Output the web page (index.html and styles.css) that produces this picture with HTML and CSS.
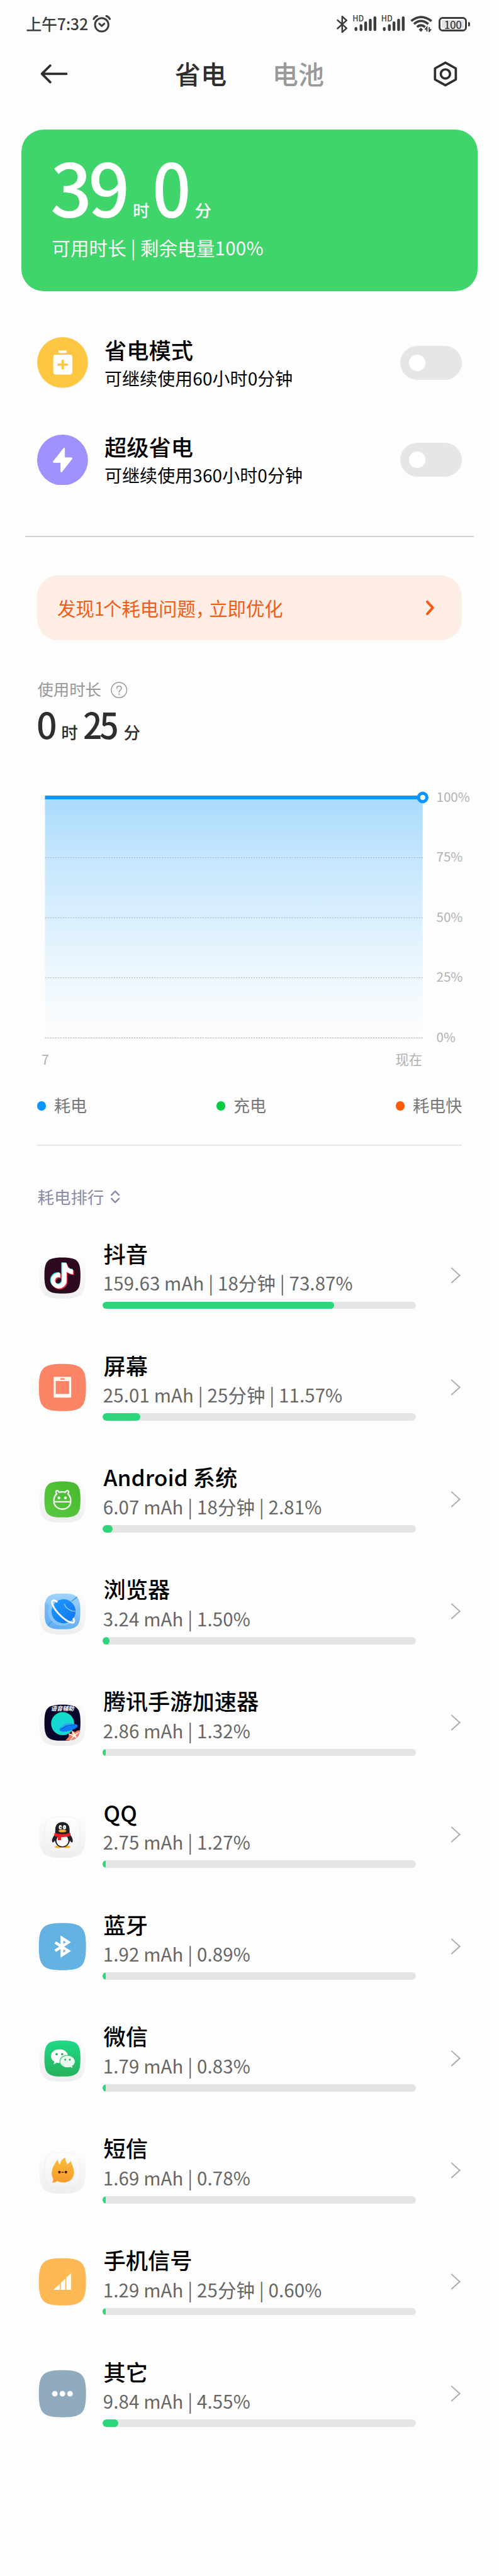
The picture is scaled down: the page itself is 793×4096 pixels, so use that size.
FILE: index.html
```html
<!DOCTYPE html>
<html lang="zh-CN">
<head>
<meta charset="utf-8">
<title>省电</title>
<link rel="stylesheet" href="styles.css">
</head>
<body>
<svg class="defs" aria-hidden="true">
  <defs>
    <linearGradient id="plate" x1="0" y1="0" x2="0" y2="1"><stop offset="0" stop-color="#fefefe"/><stop offset="1" stop-color="#eeeeef"/></linearGradient>
    <linearGradient id="white" x1="0" y1="0" x2="0" y2="1"><stop offset="0" stop-color="#fdfdfe"/><stop offset="1" stop-color="#f1f1f4"/></linearGradient>
    <linearGradient id="area" x1="0" y1="0" x2="0" y2="1"><stop offset="0" stop-color="#a9dafb"/><stop offset=".25" stop-color="#c5e6fe"/><stop offset=".5" stop-color="#daeffe"/><stop offset=".75" stop-color="#eef7fd"/><stop offset="1" stop-color="#fdfdfd"/></linearGradient>
    <linearGradient id="android" x1="0" y1="1" x2="1" y2="0"><stop offset="0" stop-color="#5acb40"/><stop offset="1" stop-color="#47b82d"/></linearGradient>
    <linearGradient id="sky" x1="0" y1="0" x2="0" y2="1"><stop offset="0" stop-color="#9ed4fc"/><stop offset="1" stop-color="#65b0f3"/></linearGradient>
    <linearGradient id="planet" x1="0" y1="0" x2="1" y2="1"><stop offset="0" stop-color="#1c9bfd"/><stop offset="1" stop-color="#1273ef"/></linearGradient>
    <radialGradient id="teal" cx=".5" cy=".6" r=".6"><stop offset="0" stop-color="#1ecfe0"/><stop offset="1" stop-color="#10dfc4"/></radialGradient>
    <linearGradient id="wechat" x1="0" y1="0" x2="0" y2="1"><stop offset="0" stop-color="#1fda88"/><stop offset="1" stop-color="#27b05a"/></linearGradient>
    <linearGradient id="flame" x1="0" y1="0" x2="0" y2="1"><stop offset="0" stop-color="#fbbd3a"/><stop offset="1" stop-color="#f69b2c"/></linearGradient>
    <path id="outer" d="M52 1C94 1 103 10 103 52S94 103 52 103 1 94 1 52 10 1 52 1Z"/>
    <path id="base" d="M52 3C93 3 102 11 102 52S93 102 52 102 2 93 2 52 11 3 52 3Z" fill="url(#plate)"/>
    <path id="inner" d="M52 13C84 13 91 20 91 52S84 91 52 91 13 84 13 52 20 13 52 13Z"/>
    <path id="note" d="M51 25h10c1 8 6 14 14 14v10c-5 0-10-2-14-5v19a17 17 0 1 1-17-17l3 .3v10a7.5 7.5 0 1 0 4 7Z"/>
    <clipPath id="clip"><use href="#inner"/></clipPath>
  </defs>
</svg>

<header class="status">
  <div class="status-left">
    <span class="clock">上午7:32</span>
    <svg class="alarm" viewBox="0 0 40 38" fill="none" stroke="#3d3d3d" stroke-width="4" stroke-linecap="round"><circle cx="20" cy="21" r="14.5"/><path d="M2.500 8.500Q5 3.500 10 2M37.500 8.500Q35 3.500 30 2"/><path d="M14.500 18.500L20 23.500 25.500 18.500"/></svg>
  </div>
  <div class="status-right">
    <svg class="s-bt" viewBox="0 0 24 40" fill="none" stroke="#3d3d3d" stroke-width="3.400" stroke-linejoin="round" stroke-linecap="round"><path d="M2 11L21.500 28.500 12 37V3L21.500 11.500 2 29"/></svg>
    <div class="signal"><span class="hd">HD</span><svg class="bars" viewBox="0 0 50 32" stroke="#3d3d3d" stroke-width="6" stroke-linecap="round"><path d="M5 26v2.500M16 20v8.500M26 14v14.500M36 8v20.500M46 3v25.500"/></svg></div>
    <div class="signal"><span class="hd">HD</span><svg class="bars" viewBox="0 0 50 32" stroke="#3d3d3d" stroke-width="6" stroke-linecap="round"><path d="M5 26v2.500M16 20v8.500M26 14v14.500M36 8v20.500M46 3v25.500"/></svg></div>
    <svg class="wifi" viewBox="0 0 48 36" fill="none" stroke="#3d3d3d" stroke-width="5"><path d="M2 11.500Q23 -6 46 11.500"/><path d="M8 18Q23 5 39 18M14.500 24.500Q23 17 32 24.500"/><path d="M23 26l4.500 4-4.500 5-4.500-5Z" fill="#3d3d3d" stroke="none"/><path d="M36 34v-9l-4 5M41 25v9l4-5" stroke-width="2.600"/></svg>
    <div class="battery"><span class="battery-level">100</span></div>
  </div>
</header>

<nav class="nav">
  <svg class="back" viewBox="0 0 60 42" fill="none" stroke="#2e2e2e" stroke-width="5" stroke-linecap="round" stroke-linejoin="round"><path d="M56.500 21H4M21.500 3L3.500 21 21.500 39"/></svg>
  <div class="tabs"><span class="tab tab-on">省电</span><span class="tab">电池</span></div>
  <svg class="gear" viewBox="0 0 54 56" fill="none" stroke="#2e2e2e" stroke-width="5" stroke-linejoin="round"><path d="M27 3.500L49.500 16V40L27 52.500 4.500 40V16Z"/><circle cx="27" cy="28" r="10"/></svg>
</nav>

<section class="card">
  <div class="remain"><span class="big">39</span><span class="unit">时</span><span class="big big-min">0</span><span class="unit">分</span></div>
  <div class="remain-note">可用时长 | 剩余电量100%</div>
</section>

<section class="modes">
  <div class="mode">
    <svg class="mode-icon" viewBox="0 0 110 110"><circle cx="55" cy="55" r="55" fill="#fec641"/><rect x="46" y="29" width="18" height="5.500" rx="1.500" fill="#fff"/><rect x="35" y="38" width="41" height="43" rx="5" fill="#fff"/><path d="M55.500 49v21M44 59.500h23" stroke="#fec641" stroke-width="5"/></svg>
    <div class="mode-text"><div class="title">省电模式</div><div class="mode-sub">可继续使用60小时0分钟</div></div>
    <span class="toggle"></span>
  </div>
  <div class="mode">
    <svg class="mode-icon" viewBox="0 0 110 110"><circle cx="55" cy="55" r="55" fill="#9e92fe"/><path d="M59.500 29V50H75L76 52 53 81.500 51 80.500V60.500H35.500L34.500 58.500 57.500 29.500Z" fill="#fff" stroke="#fff" stroke-linejoin="round"/></svg>
    <div class="mode-text"><div class="title">超级省电</div><div class="mode-sub">可继续使用360小时0分钟</div></div>
    <span class="toggle"></span>
  </div>
</section>
<hr class="rule rule-wide">

<section class="alert">
  <span class="alert-text">发现<span class="one">1</span>个耗电问题<span class="comma">，</span>立即优化</span>
  <svg class="alert-arrow" viewBox="0 0 20 34" fill="none" stroke="#fb5a0e" stroke-width="5.500" stroke-linecap="round" stroke-linejoin="round"><path d="M4 4L16 17 4 30"/></svg>
</section>

<section class="usage">
  <div class="usage-label"><span>使用时长</span>
    <svg class="help" viewBox="0 0 36 36" fill="none" stroke="#979797" stroke-width="2"><circle cx="18" cy="18" r="16.700"/><path d="M13 14.500Q13 9.500 18 9.500T23 14.500C23 18 18 18 18 22.500" stroke-linecap="round"/><path d="M18 25.500v2.600" stroke-width="2.600"/></svg>
  </div>
  <div class="spent"><span class="mid">0</span><span class="unit">时</span><span class="mid mid-min">25</span><span class="unit">分</span></div>
  <div class="chart">
    <svg class="plot" viewBox="80 1707 850 552">
      <rect x="97" y="1726" width="817" height="520" fill="url(#area)"/>
      <path d="M97 1856.500H914M97 1986.500H914M97 2116.500H914M97 2246.500H914" stroke="#8f9aa6" stroke-width="1.400" stroke-dasharray="3 2.500" fill="none" opacity=".75"/>
      <path d="M97 1726H914" stroke="#1296f5" stroke-width="8"/>
      <circle cx="914" cy="1726" r="9" fill="#fff" stroke="#0a95ff" stroke-width="7"/>
    </svg>
    <div class="ticks"><span>100%</span><span>75%</span><span>50%</span><span>25%</span><span>0%</span></div>
  </div>
  <div class="axis"><span>7</span><span>现在</span></div>
  <div class="legend">
    <span class="key"><i class="dot dot-blue"></i>耗电</span>
    <span class="key"><i class="dot dot-green"></i>充电</span>
    <span class="key"><i class="dot dot-orange"></i>耗电快</span>
  </div>
</section>
<hr class="rule">

<section class="rank">
  <div class="rank-head"><span>耗电排行</span>
    <svg class="sort" viewBox="0 0 22 30" fill="none" stroke="#8a8ca8" stroke-width="3.500" stroke-linecap="round" stroke-linejoin="round"><path d="M3 11L11 3 19 11M3 19L11 27 19 19"/></svg>
  </div>

  <div class="row">
    <svg class="app" viewBox="0 0 104 104"><use href="#base"/><use href="#inner" fill="#2d0a1f"/><use href="#note" fill="#38dcd8" x="-1.500" y="-1.500"/><use href="#note" fill="#f0324f" x="2" y="2"/><use href="#note" fill="#fff"/></svg>
    <div class="info"><div class="title">抖音</div><div class="detail">159.63 mAh | 18分钟 | 73.87%</div><div class="track"><div class="fill" style="width:73.9%"></div></div></div>
    <span class="go"></span>
  </div>
  <div class="row">
    <svg class="app" viewBox="0 0 104 104"><use href="#outer" fill="#fb8467"/><rect x="33" y="29" width="38" height="45" rx="2" fill="#fffaf2"/><rect x="37.500" y="38" width="29" height="28" fill="#fb8467"/><rect x="47" y="32" width="10" height="3.200" rx="1.500" fill="#fb8467"/></svg>
    <div class="info"><div class="title">屏幕</div><div class="detail">25.01 mAh | 25分钟 | 11.57%</div><div class="track"><div class="fill" style="width:12.1%"></div></div></div>
    <span class="go"></span>
  </div>
  <div class="row">
    <svg class="app" viewBox="0 0 104 104"><use href="#base"/><use href="#inner" fill="url(#android)"/><g fill="none" stroke="#fff" stroke-width="3"><path d="M39.500 40C35 34 41 29.500 45 36.500Q52 34.500 58 36.500C62 29.500 68 34 64 40Q70 46 70 55C70 66 62 73 52 73S33.500 66 33.500 55Q33.500 46 39.500 40ZM34 57H70"/></g><circle cx="44.500" cy="48.500" r="3" fill="#fff"/><circle cx="58.500" cy="48.500" r="3" fill="#fff"/></svg>
    <div class="info"><div class="title">Android 系统</div><div class="detail">6.07 mAh | 18分钟 | 2.81%</div><div class="track"><div class="fill" style="width:3.1%"></div></div></div>
    <span class="go"></span>
  </div>
  <div class="row">
    <svg class="app" viewBox="0 0 104 104"><use href="#base"/><g clip-path="url(#clip)"><use href="#inner" fill="url(#sky)"/><path d="M13 30L30 46 28 64 40 80 72 91H13Z" fill="#5aa9f0" opacity=".4"/><path d="M72 30l14-11M21 82l9-9" stroke="#4f9fe0" stroke-width="2.500"/><circle cx="51" cy="53" r="30" fill="#8ccafa" opacity=".7"/></g><circle cx="54.500" cy="52" r="26" fill="url(#planet)"/><path d="M56 36Q62 51 80 52" fill="none" stroke="#9bd3ff" stroke-width="1.800"/><path d="M40 31C32 25 27 29 31 38 37 53 58 73 71 76 79 78 78 72 76 68" fill="none" stroke="#fff" stroke-width="3.800" stroke-linecap="round"/></svg>
    <div class="info"><div class="title">浏览器</div><div class="detail">3.24 mAh | 1.50%</div><div class="track"><div class="fill" style="width:2.1%"></div></div></div>
    <span class="go"></span>
  </div>
  <div class="row">
    <svg class="app" viewBox="0 0 104 104"><use href="#base"/><use href="#inner" fill="#08062b"/><circle cx="52.500" cy="54" r="25" fill="url(#teal)"/><g clip-path="url(#clip)"><path d="M58 91L66 82 65 75 71 77 74 70 80 72 84 69 91 68V91Z" fill="#fb7a5b"/><path d="M72 69L76 79 66 76 75 81 69 91 77 82 84 86 80 79 91 71 79 77Z" fill="#fff3e8" stroke="#fff3e8"/></g><g transform="rotate(-14 65 62)"><ellipse cx="65" cy="63" rx="20" ry="7" fill="#0d7cf5"/><path d="M50 60Q54 52 65 53T79 60" fill="#28a5f5"/><path d="M50 62Q65 55 80 61" fill="none" stroke="#064fc4" stroke-width="1.500"/></g><text class="app-text" x="52" y="26.500" text-anchor="middle">语音辅助</text></svg>
    <div class="info"><div class="title">腾讯手游加速器</div><div class="detail">2.86 mAh | 1.32%</div><div class="track"><div class="fill" style="width:1%"></div></div></div>
    <span class="go"></span>
  </div>
  <div class="row">
    <svg class="app" viewBox="0 0 104 104"><use href="#base"/><use href="#inner" fill="url(#white)" stroke="#e8e8ea" stroke-width=".8"/><ellipse cx="43" cy="78.500" rx="8" ry="2.500" fill="#fbb02d"/><ellipse cx="61" cy="78.500" rx="8" ry="2.500" fill="#fbb02d"/><path d="M37 51C30 57 28 66 31 69 34 69 36 64 37 62ZM67 51C74 57 76 66 73 69 70 69 68 64 67 62Z" fill="#1f2024"/><path d="M52 25C61 25 67.500 31 67.500 41V49C72 64 66 79.500 52 79.500S32 64 36.500 49V41C36.500 31 43 25 52 25Z" fill="#1f2024"/><ellipse cx="52" cy="65" rx="13" ry="12.500" fill="#fff"/><ellipse cx="47.500" cy="36" rx="3.400" ry="4.600" fill="#fff"/><ellipse cx="56.500" cy="36" rx="3.400" ry="4.600" fill="#fff"/><circle cx="48.500" cy="36.500" r="1.500" fill="#1f2024"/><path d="M55 37q1.500-2 3 0" fill="none" stroke="#1f2024"/><ellipse cx="52" cy="44" rx="8.500" ry="3" fill="#fbb02d"/><path d="M35 48Q52 54 69 48L70 54Q62 57 49 57.500V64H42V56.500Q37 56 34 54Z" fill="#ed1c24"/></svg>
    <div class="info"><div class="title">QQ</div><div class="detail">2.75 mAh | 1.27%</div><div class="track"><div class="fill" style="width:1%"></div></div></div>
    <span class="go"></span>
  </div>
  <div class="row">
    <svg class="app" viewBox="0 0 104 104"><use href="#outer" fill="#64b2e2"/><path d="M36.500 43L65 61.500 51 70.500V33.500L65 42.500 36.500 61" fill="none" stroke="#fff" stroke-width="6"/></svg>
    <div class="info"><div class="title">蓝牙</div><div class="detail">1.92 mAh | 0.89%</div><div class="track"><div class="fill" style="width:1%"></div></div></div>
    <span class="go"></span>
  </div>
  <div class="row">
    <svg class="app" viewBox="0 0 104 104"><use href="#base"/><use href="#inner" fill="url(#wechat)"/><path d="M45.500 32C56 32 64 38.500 64 47S56 61.500 45.500 61.500Q42 61.500 39.500 60.800L33 64.500 34.500 58.500Q27 54 27 47C27 38.500 35 32 45.500 32Z" fill="#fff"/><path d="M63 45C72.500 45 79.500 51 79.500 58.500Q79.500 64.500 73.500 68.500L75 74 68.500 71Q66 71.800 63 71.800C53.500 71.800 46.500 66 46.500 58.500S53.500 45 63 45Z" fill="#e6fbef" stroke="#27bf68" stroke-width="1.500"/><g fill="#25ad5d"><circle cx="39.500" cy="42.500" r="2.500"/><circle cx="51.500" cy="42.500" r="2.500"/><circle cx="58" cy="54.500" r="2"/><circle cx="68" cy="54.500" r="2"/></g></svg>
    <div class="info"><div class="title">微信</div><div class="detail">1.79 mAh | 0.83%</div><div class="track"><div class="fill" style="width:1%"></div></div></div>
    <span class="go"></span>
  </div>
  <div class="row">
    <svg class="app" viewBox="0 0 104 104"><use href="#base"/><use href="#inner" fill="url(#white)" stroke="#e8e8ea" stroke-width=".8"/><path d="M30 78Q33 74 32 70C25 58 30 43 42 28Q42 36 47 39C48 32 51 26 59 24.500 57 31 62 33 62 39Q67 37 70 31C72 39 77 46 77 56 77 70 66 78 53 78 47 78 44 76 41 75Q36 79 30 78Z" fill="url(#flame)"/><g fill="#3d1a05"><circle cx="45.500" cy="55.500" r="2.900"/><circle cx="59.500" cy="55.500" r="2.900"/><rect x="50" y="55" width="5" height="1.800"/></g></svg>
    <div class="info"><div class="title">短信</div><div class="detail">1.69 mAh | 0.78%</div><div class="track"><div class="fill" style="width:1%"></div></div></div>
    <span class="go"></span>
  </div>
  <div class="row">
    <svg class="app" viewBox="0 0 104 104"><use href="#outer" fill="#feb955"/><path d="M32.500 69.500L46 57V69.500ZM48.500 54.500L58 45.500V69.500H48.500ZM60.500 43L70.500 33.500V69.500H60.500Z" fill="#fff"/></svg>
    <div class="info"><div class="title">手机信号</div><div class="detail">1.29 mAh | 25分钟 | 0.60%</div><div class="track"><div class="fill" style="width:1%"></div></div></div>
    <span class="go"></span>
  </div>
  <div class="row">
    <svg class="app" viewBox="0 0 104 104"><use href="#outer" fill="#90abbe"/><g fill="#fff"><circle cx="35.500" cy="52" r="6"/><circle cx="52" cy="52" r="6"/><circle cx="68.500" cy="52" r="6"/></g></svg>
    <div class="info"><div class="title">其它</div><div class="detail">9.84 mAh | 4.55%</div><div class="track"><div class="fill" style="width:5%"></div></div></div>
    <span class="go"></span>
  </div>
</section>
</body>
</html>
```
FILE: styles.css
```css
/* 1rem is ten design pixels of the 1080-wide layout */
html { font-size: 7.347px; background: #fdfdfd; overflow-x: hidden; }
* { box-sizing: border-box; }
body {
  margin: 0;
  width: 100%;
  overflow: hidden;
  font-family: "Noto Sans CJK SC", "Noto Sans", sans-serif;
  font-size: 4rem;
  color: #000;
  white-space: nowrap;
}
svg { display: block; flex: none; }
.defs { position: absolute; width: 0; height: 0; }

.status {
  height: 10.4rem;
  padding: 0 6.9rem 0 5.6rem;
  display: flex;
  justify-content: space-between;
  align-items: center;
  color: #3d3d3d;
}
.status-left, .status-right { display: flex; align-items: center; }
.clock { font-size: 3.4rem; font-weight: 500; line-height: 4rem; letter-spacing: -.03rem; margin-top: -.2rem; }
.alarm { width: 4rem; height: 3.8rem; margin-left: .9rem; }
.s-bt { width: 2.4rem; height: 4rem; margin-right: 1.2rem; }
.signal { position: relative; width: 5rem; height: 3.2rem; margin-right: 1.2rem; }
.hd { position: absolute; left: -.2rem; top: -.5rem; font-size: 1.7rem; line-height: 1.7rem; font-weight: 500; }
.bars { width: 5rem; height: 3.2rem; }
.wifi { width: 4.8rem; height: 3.6rem; margin: 0 1.3rem 0 -.1rem; }
.battery {
  position: relative;
  width: 6.2rem;
  height: 3.1rem;
  border: .42rem solid #3d3d3d;
  border-radius: .9rem;
  display: flex;
  justify-content: center;
  align-items: center;
}
.battery-level { background: #e3e3e3; font-size: 2.3rem; height: 1.7rem; width: 4.8rem; font-weight: 500; display: flex; justify-content: center; align-items: center; letter-spacing: -.05rem; }
.battery::after { content: ""; position: absolute; right: -1.1rem; top: .65rem; width: .5rem; height: 1rem; background: #3d3d3d; border-radius: 0 .3rem .3rem 0; }

.nav { height: 11.3rem; padding: 0 8.9rem 0 8.7rem; display: flex; justify-content: space-between; align-items: center; }
.back { width: 6rem; height: 4.2rem; }
.tabs { display: flex; gap: 9.9rem; margin-left: -.4rem; }
.tab { font-size: 5.6rem; line-height: 7rem; font-weight: 500; color: #999; margin-top: -.2rem; }
.tab-on { color: #2e2e2e; }
.gear { width: 5.4rem; height: 5.6rem; }

.card {
  margin: 6.3rem 4.6rem 0;
  height: 35rem;
  padding: 4.1rem 6.6rem 0;
  border-radius: 4.8rem;
  background: #40d56a;
  color: #fff;
}
.remain, .spent { display: flex; align-items: baseline; }
.remain { height: 16rem; line-height: 16rem; }
.big { font-size: 15.8rem; font-weight: 500; letter-spacing: -.8rem; margin-left: -.3rem; }
.big-min { margin-left: .6rem; transform: scaleX(.93); transform-origin: left; }
.unit { font-size: 3.6rem; font-weight: 500; }
.big + .unit { margin-left: 1.4rem; }
.big-min + .unit { margin-left: 1rem; }
.remain-note { margin-top: 3.1rem; font-size: 4rem; line-height: 4.8rem; letter-spacing: .04rem; }

.modes { margin: 5rem 8rem 0; }
.mode { height: 21rem; display: flex; align-items: center; }
.mode-icon { width: 11rem; height: 11rem; }
.mode-text { flex: 1; margin-left: 3.6rem; margin-top: .1rem; }
.title { font-size: 4.8rem; line-height: 5.6rem; font-weight: 500; }
.mode-sub { font-size: 3.8rem; line-height: 4.8rem; margin-top: 1.1rem; letter-spacing: .02rem; }
.toggle { width: 13.4rem; height: 7.4rem; border-radius: 3.7rem; background: #e6e6e6; padding: 1.95rem; }
.toggle::before { content: ""; display: block; width: 3.5rem; height: 3.5rem; border-radius: 50%; background: #fff; }

.rule { border: 0; margin: 6.3rem 8rem 0; height: .2rem; background: #e5e5e8; }
.rule-wide { margin: 6rem 5.4rem 0; background: #d4d4d4; }

.alert {
  margin: 8.4rem 8rem 0;
  height: 14rem;
  padding: 0 5.9rem 0 4.4rem;
  border-radius: 4.6rem;
  background: #feede5;
  color: #f45c16;
  display: flex;
  align-items: center;
  justify-content: space-between;
}
.alert-text { margin-top: -.1rem; line-height: 4.8rem; }
.one { letter-spacing: -.3rem; }
.comma { letter-spacing: -1.1rem; }
.alert-arrow { width: 2rem; height: 3.4rem; }

.usage { margin-top: 8.2rem; }
.usage-label { margin-left: 8.1rem; display: flex; align-items: center; font-size: 3.45rem; line-height: 4.8rem; color: #979797; }
.help { width: 3.6rem; height: 3.6rem; margin: .2rem 0 0 2rem; }
.spent { margin: 1.1rem 0 0 7.9rem; height: 8rem; line-height: 8rem; color: #2e2e2e; }
.mid { font-size: 7.8rem; font-weight: 500; letter-spacing: -.6rem; }
.mid-min { margin-left: 1.1rem; transform: scaleX(.93); transform-origin: left; }
.mid + .unit { margin-left: 1.5rem; }
.mid-min + .unit { margin-left: 1.1rem; }
.chart { margin: 10rem 0 0 8rem; display: flex; height: 55.2rem; }
.plot { width: 85rem; height: 55.2rem; }
.ticks { margin: .1rem 0 -.1rem 1.4rem; display: flex; flex-direction: column; justify-content: space-between; font-size: 2.8rem; line-height: 3.2rem; color: #b2b2b2; }
.axis { margin: 1.6rem 16.6rem 0 9rem; display: flex; justify-content: space-between; font-size: 2.9rem; line-height: 3.6rem; color: #b2b2b2; }
.legend { margin: 5.8rem 8rem 0; display: flex; justify-content: space-between; font-size: 3.55rem; line-height: 4.8rem; color: #777; }
.key { display: flex; align-items: center; }
.dot { width: 2rem; height: 2rem; border-radius: 50%; margin: .2rem 1.7rem 0 0; }
.dot-blue { background: #0a95ff; }
.dot-green { background: #06cc45; }
.dot-orange { background: #fb5a06; }
.legend + .rule, .usage + .rule { margin-top: 6.1rem; }

.rank { margin: 8.6rem 8rem 0; }
.rank-head { display: flex; align-items: center; margin: 0 0 2.6rem .1rem; font-size: 3.6rem; line-height: 4.8rem; color: #8a8ca8; }
.sort { width: 2.2rem; height: 3rem; margin: .2rem 0 0 1.3rem; }
.row { height: 24.2rem; display: flex; align-items: center; padding: 0 .2rem 0 .3rem; }
.app { width: 10.4rem; height: 10.4rem; }
.app-text { font-size: 12.5px; font-weight: 700; font-style: italic; fill: #fff; }
.info { width: 67.8rem; height: 24.2rem; padding-top: 4.4rem; margin-left: 3.5rem; }
.info .title { margin-left: .2rem; }
.detail { margin: 1.3rem 0 0 .1rem; line-height: 4.8rem; color: #666; letter-spacing: .02rem; }
.track { margin-top: 1.6rem; height: 1.6rem; border-radius: .8rem; background: #e4e4e4; overflow: hidden; }
.fill { height: 100%; border-radius: .8rem; background: #2dd57b; }
.go {
  width: 2.5rem;
  height: 2.5rem;
  margin-left: auto;
  border: solid #b0b0b0;
  border-width: .28rem .28rem 0 0;
  transform: translateX(-.7rem) scaleX(1.1) rotate(45deg);
}
```
